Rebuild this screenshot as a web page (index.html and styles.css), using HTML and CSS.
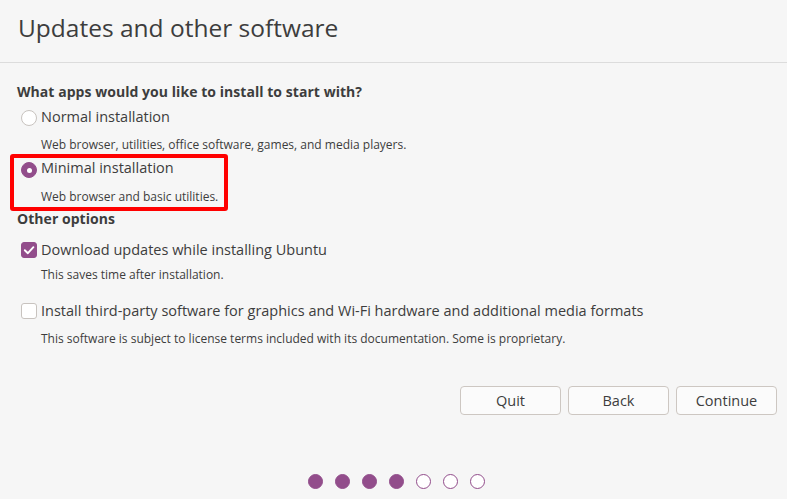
FILE: index.html
```html
<!DOCTYPE html>
<html lang="en">
<head>
<meta charset="utf-8">
<title>Updates and other software</title>
<link rel="stylesheet" href="styles.css">
</head>
<body>
<div class="page">
  <header class="header">
    <h1 class="title">Updates and other software</h1>
  </header>
  <main class="content">
    <h2 class="section-title">What apps would you like to install to start with?</h2>
    <div class="group group-normal">
      <div class="row"><span class="radio"></span><span class="label">Normal installation</span></div>
      <p class="desc desc-normal">Web browser, utilities, office software, games, and media players.</p>
    </div>
    <div class="group group-minimal highlighted">
      <div class="row"><span class="radio checked"></span><span class="label">Minimal installation</span></div>
      <p class="desc desc-minimal">Web browser and basic utilities.</p>
    </div>
    <h2 class="section-title section-other">Other options</h2>
    <div class="group group-updates">
      <div class="row"><span class="check checked"><svg viewBox="0 0 16 16" width="16" height="16"><path d="M3.8 8.2 L6.9 11.2 L12.4 5.2" fill="none" stroke="#fff" stroke-width="1.9" stroke-linecap="round" stroke-linejoin="round"/></svg></span><span class="label">Download updates while installing Ubuntu</span></div>
      <p class="desc desc-updates">This saves time after installation.</p>
    </div>
    <div class="group group-thirdparty">
      <div class="row"><span class="check"></span><span class="label label-low">Install third-party software for graphics and Wi-Fi hardware and additional media formats</span></div>
      <p class="desc desc-thirdparty">This software is subject to license terms included with its documentation. Some is proprietary.</p>
    </div>
  </main>
  <div class="actions">
    <button class="btn">Quit</button>
    <button class="btn">Back</button>
    <button class="btn">Continue</button>
  </div>
  <div class="progress">
    <span class="dot done"></span>
    <span class="dot done"></span>
    <span class="dot done"></span>
    <span class="dot done"></span>
    <span class="dot"></span>
    <span class="dot"></span>
    <span class="dot"></span>
  </div>
</div>
</body>
</html>
```

FILE: styles.css
```css
*,
*::before,
*::after {
  box-sizing: border-box;
  margin: 0;
  padding: 0;
}

body {
  margin: 0;
  background: #f6f6f6;
  font-family: "Open Sans", "DejaVu Sans", sans-serif;
  color: #3d3d3d;
}

.page {
  width: 787px;
  height: 499px;
  overflow: hidden;
}

.header {
  height: 63px;
  padding: 10px 0 0 18px;
  border-bottom: 1px solid #dcdcdc;
}

.title {
  font-size: 24.5px;
  font-weight: 400;
  line-height: 36px;
}

.content {
  padding: 19px 0 0 17px;
}

.section-title {
  font-size: 14px;
  font-weight: 700;
  line-height: 20px;
  letter-spacing: 0.05px;
}

.section-other {
  margin-top: 3px;
}

.group-normal { margin-top: 2px; }
.group-minimal { margin-top: 1px; }
.group-updates { margin-top: 8px; }
.group-thirdparty { margin-top: 13px; }

.highlighted {
  position: relative;
}

.highlighted::after {
  content: "";
  position: absolute;
  left: -7px;
  top: -1px;
  width: 218px;
  height: 57px;
  border: 4px solid #ff0000;
  border-radius: 3px;
}

.row {
  display: flex;
  align-items: flex-start;
  height: 24px;
}

.label {
  font-size: 14.5px;
  line-height: 24px;
  padding-top: 1px;
}

.label-low {
  padding-top: 2px;
}

.radio,
.check {
  flex: none;
  width: 16px;
  height: 16px;
  margin: 6px 4px 0 4px;
  background: #ffffff;
  border: 1px solid #c8c3bf;
}

.radio {
  border-radius: 50%;
  position: relative;
}

.radio.checked {
  background: #924d8b;
  border-color: #924d8b;
}

.radio.checked::after {
  content: "";
  position: absolute;
  left: 4.5px;
  top: 4.5px;
  width: 5px;
  height: 5px;
  border-radius: 50%;
  background: #ffffff;
}

.group-minimal .radio { margin-top: 7px; }
.group-updates .check { margin-top: 5px; }

.check {
  border-radius: 3px;
}

.check.checked {
  background: #924d8b;
  border-color: #924d8b;
}

.check svg {
  display: block;
  margin: -1px;
}

.desc {
  margin-left: 24px;
  font-size: 12px;
  line-height: 18px;
}

.desc-normal { margin-top: 8px; }
.desc-minimal { margin-top: 9px; }
.desc-updates { margin-top: 5px; }
.desc-thirdparty { margin-top: 9px; }

.actions {
  display: flex;
  justify-content: flex-end;
  gap: 7px;
  margin-top: 38px;
  padding-right: 10px;
}

.btn {
  width: 101px;
  height: 29px;
  font-family: inherit;
  font-size: 14.5px;
  color: #3d3d3d;
  background: #fbfbfb;
  border: 1px solid #cdc7c2;
  border-radius: 4px;
}

.progress {
  display: flex;
  justify-content: center;
  gap: 12px;
  margin-top: 59px;
  padding-left: 6px;
}

.dot {
  width: 15px;
  height: 15px;
  border-radius: 50%;
  background: #ffffff;
  border: 1.5px solid #924d8b;
}

.dot.done {
  background: #924d8b;
}
```
